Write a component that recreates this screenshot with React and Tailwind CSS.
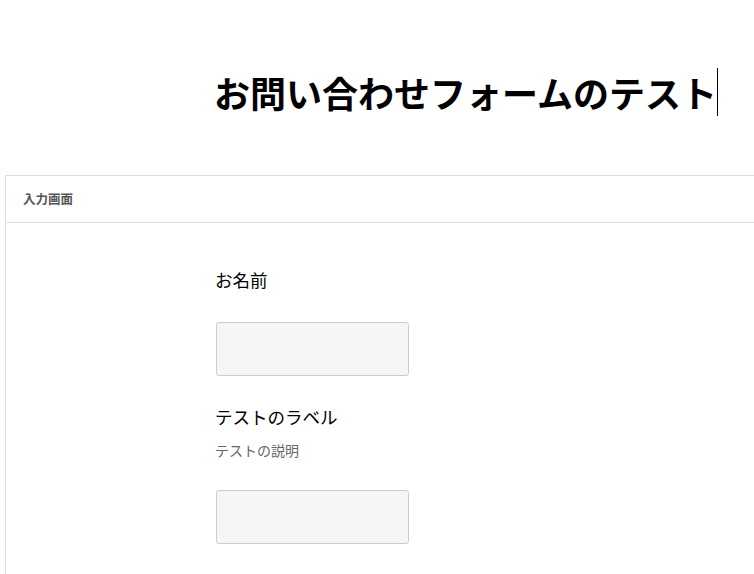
export default function App() {
  const jp = { fontFamily: '"Noto Sans CJK JP", "Noto Sans", sans-serif' };
  return (
    <div className="w-[754px] h-[574px] overflow-hidden bg-white text-black" style={jp}>
      <div className="h-[175px] pl-[214px] pt-[68px]">
        <div className="inline-flex items-center">
          <h1 className="text-[36px] font-bold leading-[48px]">お問い合わせフォームのテスト</h1>
          <span className="w-px h-[48px] bg-black" />
        </div>
      </div>
      <div className="ml-[5px] mr-[-20px] border border-[#dedede] pb-[100px]">
        <div className="h-[47px] border-b border-[#dedede] pl-[17px] flex items-center">
          <span className="text-[12.5px] font-bold text-[#555]">入力画面</span>
        </div>
        <div className="pl-[210px] pt-[44px]">
          <div className="-ml-[1px] text-[17.5px] leading-[26px]">お名前</div>
          <div className="mt-[29px] w-[193px] h-[54px] bg-[#f6f6f6] border border-[#ccc] rounded-[3px]" />
          <div className="-ml-[1px] mt-[28px] text-[17.5px] leading-[26px]">テストのラベル</div>
          <div className="-ml-[1px] mt-[10px] text-[14px] leading-[20px] text-[#666]">テストの説明</div>
          <div className="mt-[30px] w-[193px] h-[54px] bg-[#f6f6f6] border border-[#ccc] rounded-[3px]" />
        </div>
      </div>
    </div>
  );
}
